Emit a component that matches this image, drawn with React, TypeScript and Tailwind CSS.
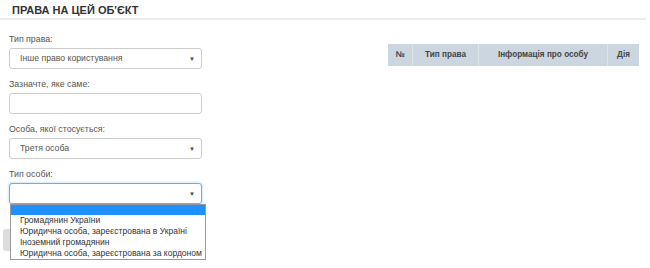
import React from "react";

const font = { fontFamily: '"Liberation Sans", Arial, sans-serif' };

function Arrow() {
  return <span className="absolute right-[6px] top-1/2 -translate-y-1/2 text-[6px] text-[#444]">▼</span>;
}

function Select({ value, focus }: { value: string; focus?: boolean }) {
  return (
    <div
      className={`relative h-[21px] w-[193px] rounded-[3px] border bg-white pl-[10px] text-[8.7px] leading-[19px] text-[#555] ${
        focus ? "border-[#66afe9] shadow-[0_0_3px_rgba(102,175,233,0.6)]" : "border-[#ccc]"
      }`}
    >
      {value}
      <Arrow />
    </div>
  );
}

function Label({ children, first }: { children: React.ReactNode; first?: boolean }) {
  return (
    <div className={`${first ? "" : "mt-[9px]"} text-[8.8px] leading-[12px] text-[#555]`}>{children}</div>
  );
}

export default function App() {
  return (
    <div className="relative h-[268px] w-[650px] overflow-hidden bg-white" style={font}>
      <div className="px-[12px] pt-[4px] text-[11px] font-bold leading-[13px] text-[#333]">ПРАВА НА ЦЕЙ ОБ'ЄКТ</div>
      <div className="mt-[1px] h-[2px] w-[646px] bg-[#ececec]" />
      <div className="flex pl-[9px] pt-[13px]">
        <div className="flex w-[193px] flex-col">
          <Label first>Тип права:</Label>
          <div className="mt-[3px]">
            <Select value="Інше право користування" />
          </div>
          <Label>Зазначте, яке саме:</Label>
          <div className="mt-[3px] h-[21px] w-[193px] rounded-[3px] border border-[#ccc] bg-white" />
          <Label>Особа, якої стосується:</Label>
          <div className="mt-[3px]">
            <Select value="Третя особа" />
          </div>
          <Label>Тип особи:</Label>
          <div className="relative mt-[3px]">
            <Select value="" focus />
            <div className="absolute left-[-6px] top-[46px] h-[22px] w-[20px] rounded-[3px] bg-[#ddd]" />
            <div className="absolute left-[1px] top-[21px] z-10 w-[196px] border border-[#999] bg-white text-[8.5px] leading-[11px] text-[#333]">
              <div className="h-[10px] bg-[#1e90ff]" />
              <div className="whitespace-nowrap pl-[9px]">Громадянин України</div>
              <div className="whitespace-nowrap pl-[9px]">Юридична особа, зареєстрована в Україні</div>
              <div className="whitespace-nowrap pl-[9px]">Іноземний громадянин</div>
              <div className="whitespace-nowrap pl-[9px]">Юридична особа, зареєстрована за кордоном</div>
            </div>
          </div>
        </div>
        <div className="ml-[186px] mt-[11px]">
          <div className="flex h-[22px] w-[251px] bg-[#ccd6e0] text-[8.2px] font-bold text-[#444]">
            <div className="flex w-[25px] items-center justify-center border-r border-[#dde4ea]">№</div>
            <div className="flex w-[66px] items-center justify-center border-r border-[#dde4ea]">Тип права</div>
            <div className="flex w-[129px] items-center justify-center border-r border-[#dde4ea]">Інформація про особу</div>
            <div className="flex flex-1 items-center justify-center">Дія</div>
          </div>
        </div>
      </div>
    </div>
  );
}
